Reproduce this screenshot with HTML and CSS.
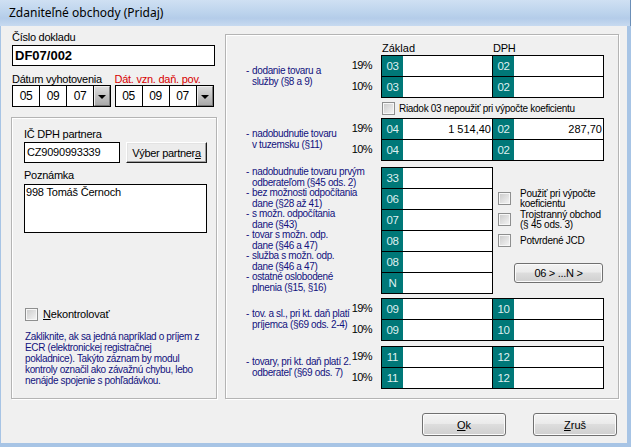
FILE: index.html
```html
<!DOCTYPE html>
<html lang="sk">
<head>
<meta charset="utf-8">
<title>Zdaniteľné obchody (Pridaj)</title>
<link rel="stylesheet" href="styles.css">
</head>
<body>
<div class="win">
  <div class="titlebar">Zdaniteľné obchody (Pridaj)</div>
  <div class="client">
    <div class="main">
      <div class="leftcol">
        <div class="lbl top">Číslo dokladu</div>
        <div class="inp doc">DF07/002</div>
        <div class="daterow">
          <div class="datecol">
            <div class="lbl dl">Dátum vyhotovenia</div>
            <div class="date"><span class="dc">05</span><span class="dc">09</span><span class="dc">07</span><span class="dd"><span class="tri"></span></span></div>
          </div>
          <div class="datecol">
            <div class="lbl dl red">Dát. vzn. daň. pov.</div>
            <div class="date"><span class="dc">05</span><span class="dc">09</span><span class="dc">07</span><span class="dd"><span class="tri"></span></span></div>
          </div>
        </div>
        <div class="group lgroup">
          <div class="lbl">IČ DPH partnera</div>
          <div class="partner">
            <div class="inp ic">CZ9090993339</div>
            <button class="cbtn">Výber partner<u>a</u></button>
          </div>
          <div class="lbl pz">Poznámka</div>
          <div class="inp note">998 Tomáš Černoch</div>
          <div class="chk nk"><span class="cb"></span><span><u>N</u>ekontrolovať</span></div>
          <p class="hint">Zakliknite, ak sa jedná napríklad o príjem z<br>ECR (elektronickej registračnej<br>pokladnice). Takýto záznam by modul<br>kontroly označil ako závažnú chybu, lebo<br>nenájde spojenie s pohľadávkou.</p>
        </div>
      </div>

      <div class="group rgroup">
        <div class="hdr"><span class="hz">Základ</span><span class="hd">DPH</span></div>

        <div class="sec">
          <div class="desc"><span class="dash">-</span><span>dodanie tovaru a<br>služby (§8 a 9)</span></div>
          <div class="pcts"><div>19%</div><div>10%</div></div>
          <div class="pair">
            <div class="box zak">
              <div class="r"><span class="code">03</span><span class="val"></span></div>
              <div class="r"><span class="code">03</span><span class="val"></span></div>
            </div>
            <div class="box dph">
              <div class="r"><span class="code">02</span><span class="val"></span></div>
              <div class="r"><span class="code">02</span><span class="val"></span></div>
            </div>
          </div>
        </div>

        <div class="chk riadok"><span class="cb"></span><span>Riadok 03 nepoužiť pri výpočte koeficientu</span></div>

        <div class="sec">
          <div class="desc"><span class="dash">-</span><span>nadobudnutie tovaru<br>v tuzemsku (§11)</span></div>
          <div class="pcts"><div>19%</div><div>10%</div></div>
          <div class="pair">
            <div class="box zak">
              <div class="r"><span class="code">04</span><span class="val">1&nbsp;514,40</span></div>
              <div class="r"><span class="code">04</span><span class="val"></span></div>
            </div>
            <div class="box dph">
              <div class="r"><span class="code">02</span><span class="val">287,70</span></div>
              <div class="r"><span class="code">02</span><span class="val"></span></div>
            </div>
          </div>
        </div>

        <div class="sec csec">
          <div class="dlist">
            <div class="di"><span class="dash">-</span><span>nadobudnutie tovaru prvým<br>odberateľom (§45 ods. 2)</span></div>
            <div class="di"><span class="dash">-</span><span>bez možnosti odpočítania<br>dane (§28 až 41)</span></div>
            <div class="di"><span class="dash">-</span><span>s možn. odpočítania<br>dane (§43)</span></div>
            <div class="di"><span class="dash">-</span><span>tovar s možn. odp.<br>dane (§46 a 47)</span></div>
            <div class="di"><span class="dash">-</span><span>služba s možn. odp.<br>dane (§46 a 47)</span></div>
            <div class="di"><span class="dash">-</span><span>ostatné oslobodené<br>plnenia (§15, §16)</span></div>
          </div>
          <div class="pair">
            <div class="box zak">
              <div class="r"><span class="code">33</span><span class="val"></span></div>
              <div class="r"><span class="code">06</span><span class="val"></span></div>
              <div class="r"><span class="code">07</span><span class="val"></span></div>
              <div class="r"><span class="code">08</span><span class="val"></span></div>
              <div class="r"><span class="code">08</span><span class="val"></span></div>
              <div class="r"><span class="code">N</span><span class="val"></span></div>
            </div>
            <div class="side">
              <div class="chk sc"><span class="cb"></span><span>Použiť pri výpočte<br>koeficientu</span></div>
              <div class="chk sc"><span class="cb"></span><span>Trojstranný obchod<br>(§ 45 ods. 3)</span></div>
              <div class="chk sc"><span class="cb"></span><span>Potvrdené JCD</span></div>
              <button class="vbtn nbtn">06 &gt; ...N &gt;</button>
            </div>
          </div>
        </div>

        <div class="sec dsec">
          <div class="desc"><span class="dash">-</span><span>tov. a sl., pri kt. daň platí<br>príjemca (§69 ods. 2-4)</span></div>
          <div class="pcts"><div>19%</div><div>10%</div></div>
          <div class="pair">
            <div class="box zak">
              <div class="r"><span class="code">09</span><span class="val"></span></div>
              <div class="r"><span class="code">09</span><span class="val"></span></div>
            </div>
            <div class="box dph">
              <div class="r"><span class="code">10</span><span class="val"></span></div>
              <div class="r"><span class="code">10</span><span class="val"></span></div>
            </div>
          </div>
        </div>

        <div class="sec esec">
          <div class="desc"><span class="dash">-</span><span>tovary, pri kt. daň platí 2.<br>odberateľ (§69 ods. 7)</span></div>
          <div class="pcts"><div>19%</div><div>10%</div></div>
          <div class="pair">
            <div class="box zak">
              <div class="r"><span class="code">11</span><span class="val"></span></div>
              <div class="r"><span class="code">11</span><span class="val"></span></div>
            </div>
            <div class="box dph">
              <div class="r"><span class="code">12</span><span class="val"></span></div>
              <div class="r"><span class="code">12</span><span class="val"></span></div>
            </div>
          </div>
        </div>
      </div>
    </div>
    <div class="btnbar">
      <button class="vbtn"><u>O</u>k</button>
      <button class="vbtn"><u>Z</u>ruš</button>
    </div>
  </div>
</div>
</body>
</html>
```

FILE: styles.css
```css
* { box-sizing: border-box; }
html, body { margin: 0; padding: 0; }
body {
  width: 631px;
  height: 447px;
  overflow: hidden;
  background: #f0f0f0;
  font-family: "Liberation Sans", Arial, sans-serif;
  font-size: 11px;
  color: #000;
}
u { text-decoration: underline; text-underline-offset: 1px; }

.win {
  width: 631px;
  height: 447px;
  display: flex;
  flex-direction: column;
  background: #f0f0f0;
}
.titlebar {
  height: 26px;
  line-height: 25px;
  padding-left: 9px;
  font-family: "Noto Sans", "Liberation Sans", sans-serif;
  font-size: 12px;
  color: #000;
  background: linear-gradient(#cfe0f3, #bcd3ec 50%, #b4cce9 70%, #c7daf0);
  border-right: 1px solid #6b8fb8;
}
.client {
  flex: 1;
  border-left: 1px solid #a7c4e5;
  border-right: 4px solid #a7c4e5;
  border-bottom: 4px solid #a7c4e5;
  padding: 8px 8px 7px 10px;
  display: flex;
  flex-direction: column;
}
.main {
  display: flex;
  gap: 8px;
  height: 365px;
}

/* left column */
.leftcol {
  width: 206px;
  display: flex;
  flex-direction: column;
  margin-top: -3px;
}
.lbl {
  line-height: 13px;
  letter-spacing: -0.25px;
  padding-left: 1px;
  white-space: nowrap;
}
.lbl.red { color: #d80000; }
.inp {
  background: #fff;
  border: 1px solid #000;
  height: 21px;
  line-height: 19px;
  padding-left: 2px;
  letter-spacing: -0.2px;
  white-space: nowrap;
}
.inp.doc {
  margin: 1px 0 0 1px;
  width: 203px;
  font-weight: bold;
  font-size: 13px;
  letter-spacing: 0;
}
.daterow {
  display: flex;
  margin-top: 8px;
  padding-left: 1px;
}
.datecol { width: 105px; }
.dl { line-height: 11px; padding-left: 0; }
.date {
  display: flex;
  width: 99px;
  height: 22px;
  border: 1px solid #000;
  background: #fff;
}
.dc {
  width: 27px;
  border-right: 1px solid #000;
  text-align: center;
  line-height: 20px;
  font-size: 12px;
  letter-spacing: -0.3px;
}
.dd {
  flex: 1;
  display: flex;
  align-items: center;
  justify-content: center;
  background: linear-gradient(#dcdcdc, #a9a9a9);
  border-top: 1px solid #eee;
  border-left: 1px solid #eee;
  border-right: 1px solid #7a7a7a;
  border-bottom: 1px solid #7a7a7a;
}
.tri {
  width: 0; height: 0;
  border-left: 4px solid transparent;
  border-right: 4px solid transparent;
  border-top: 4px solid #000;
  margin-top: 2px;
}

.group {
  border: 1px solid #b4b4b4;
  box-shadow: inset 1px 1px 0 #fff, 1px 1px 0 #fff;
}
.lgroup {
  flex: 1;
  margin-top: 10px;
  padding: 10px 9px 0 12px;
  display: flex;
  flex-direction: column;
}
.lgroup .lbl { padding-left: 0; }
.partner {
  display: flex;
  margin-top: 1px;
  gap: 6px;
}
.inp.ic { width: 96px; }
.cbtn {
  width: 81px;
  height: 21px;
  padding: 0;
  font-family: inherit;
  font-size: 11px;
  letter-spacing: -0.3px;
  color: #000;
  background: #ececec;
  border: 1px solid;
  border-color: #fff #1a1a1a #1a1a1a #fff;
  box-shadow: inset -1px -1px 0 #a0a0a0, inset 1px 1px 0 #e3e3e3;
  white-space: nowrap;
}
.pz { margin-top: 6px; }
.inp.note {
  margin-top: 2px;
  width: 183px;
  height: 49px;
  line-height: 13px;
  padding: 1px 0 0 1px;
}
.chk {
  display: flex;
  align-items: center;
  white-space: nowrap;
}
.cb {
  width: 13px;
  height: 13px;
  flex: none;
  border: 1px solid #8e8f8f;
  background: linear-gradient(135deg, #c9c9c9, #f6f6f6);
  box-shadow: inset 0 0 0 1px #f7f7f7;
}
.nk {
  margin-top: 75px;
  margin-left: 1px;
  gap: 5px;
  line-height: 13px;
  letter-spacing: -0.2px;
}
.hint {
  margin: 10px 0 0 1px;
  font-size: 10px;
  line-height: 11px;
  letter-spacing: -0.35px;
  color: #12127e;
  white-space: nowrap;
}

/* right group */
.rgroup {
  width: 394px;
  padding: 7px 14px 9px 19px;
  display: flex;
  flex-direction: column;
}
.hdr {
  display: flex;
  height: 13px;
  line-height: 13px;
  padding-left: 136px;
}
.hz { width: 112px; padding-left: 1px; }
.hd { letter-spacing: -0.3px; }
.sec { display: flex; }
.desc {
  width: 105px;
  display: flex;
  align-items: center;
  font-size: 10px;
  line-height: 10.5px;
  letter-spacing: -0.35px;
  color: #12127e;
  white-space: nowrap;
}
.dash { width: 7px; flex: none; padding-left: 1px; align-self: center; }
.desc .dash { align-self: auto; margin-top: -10px; }
.pcts {
  width: 22px;
  margin-right: 9px;
  text-align: right;
  font-size: 11px;
  letter-spacing: -0.6px;
}
.pcts div { height: 21px; line-height: 21px; }
.pair { display: flex; width: 223px; align-items: flex-start; }
.box { border: 1px solid #000; background: #fff; }
.box.zak { width: 112px; }
.box.dph { width: 111px; border-left: none; }
.r { display: flex; height: 20px; }
.r + .r { height: 21px; border-top: 1px solid #000; }
.code {
  width: 21px;
  flex: none;
  background: #007878;
  color: #dff0f0;
  text-align: center;
  line-height: 20px;
  font-size: 11.5px;
  letter-spacing: -0.3px;
}
.val {
  flex: 1;
  text-align: right;
  padding-right: 1px;
  line-height: 20px;
  font-size: 11px;
  white-space: nowrap;
}
.riadok {
  height: 20px;
  padding-left: 137px;
  gap: 4px;
  font-size: 10px;
  letter-spacing: -0.3px;
}

.csec { margin-top: 6px; }
.dlist { width: 136px; display: flex; flex-direction: column; }
.di {
  height: 21px;
  display: flex;
  align-items: center;
  font-size: 10px;
  line-height: 10.5px;
  letter-spacing: -0.35px;
  color: #12127e;
  white-space: nowrap;
}
.di .dash { align-self: auto; margin-top: -10px; }
.side {
  width: 111px;
  padding: 21px 0 0 5px;
  display: flex;
  flex-direction: column;
}
.sc {
  height: 21px;
  gap: 9px;
  font-size: 10px;
  line-height: 10px;
  letter-spacing: -0.25px;
}
.vbtn {
  width: 84px;
  height: 23px;
  padding: 0;
  font-family: inherit;
  font-size: 11px;
  color: #000;
  border: 1px solid #707070;
  border-radius: 3px;
  background: linear-gradient(#f3f3f3, #ebebeb 45%, #dddddd 50%, #cfcfcf);
  box-shadow: inset 0 0 0 1px #fbfbfb;
}
.nbtn {
  width: 89px;
  height: 20px;
  margin: 12px 0 0 16px;
  letter-spacing: -0.3px;
}
.dsec { margin-top: 4px; }
.esec { margin-top: 5px; }

.btnbar {
  display: flex;
  justify-content: flex-end;
  gap: 27px;
  margin-top: 14px;
  padding-right: 2px;
}
```
